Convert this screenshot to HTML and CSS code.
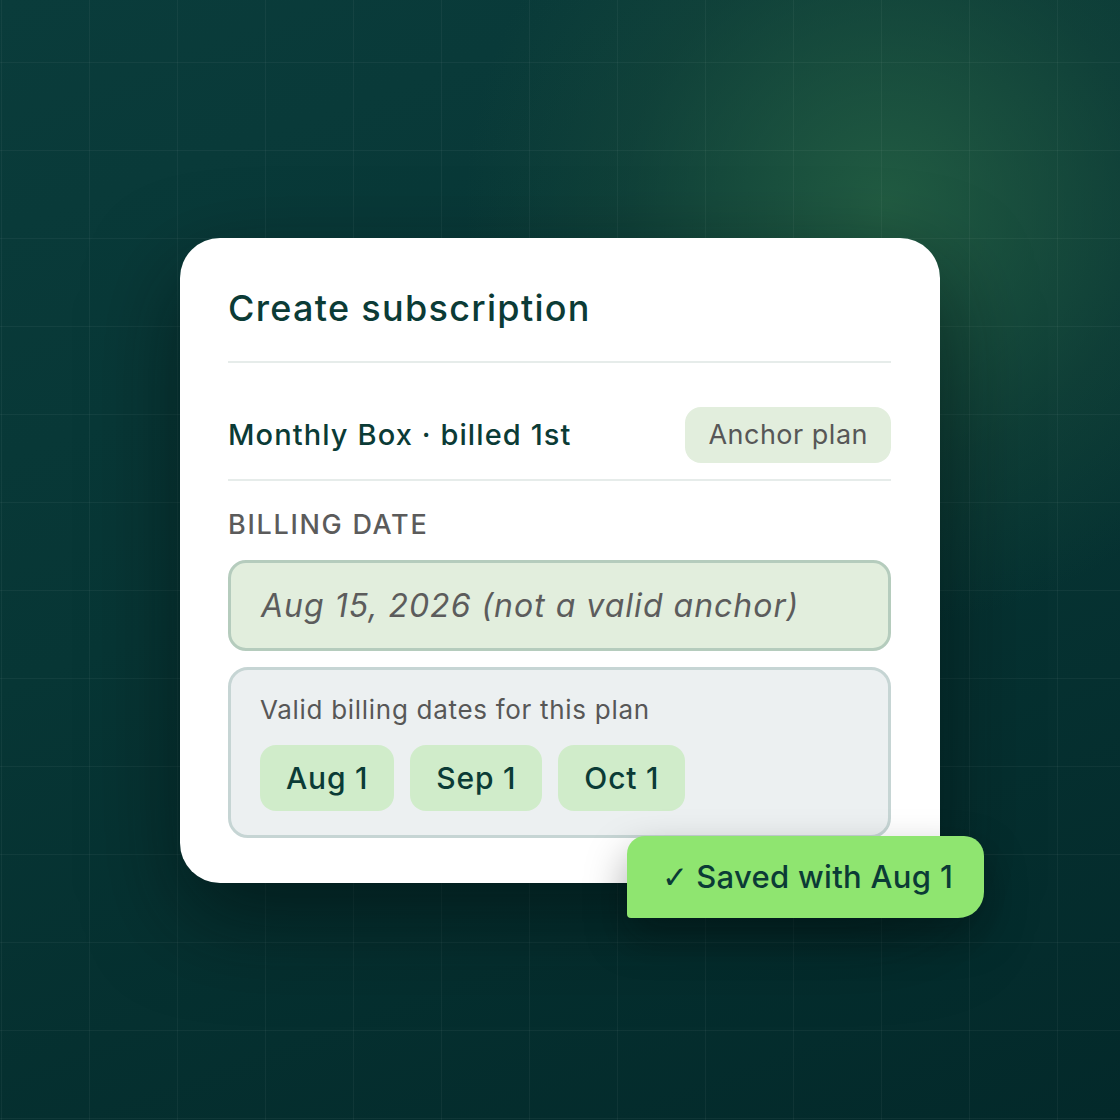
FILE: index.html
```html
<!DOCTYPE html>
<html lang="en">
<head>
    <meta charset="UTF-8">
    <meta name="viewport" content="width=device-width, initial-scale=1.0">
    <title>Create subscription</title>
    <link rel="stylesheet" href="styles.css">
</head>
<body>
    <div class="stage">
        <div class="card">
            <h1 class="title">Create subscription</h1>

            <div class="plan-row">
                <span class="plan-name">Monthly Box · billed 1st</span>
                <span class="badge">Anchor plan</span>
            </div>

            <div class="field">
                <label class="field-label">BILLING DATE</label>
                <div class="date-input">Aug 15, 2026 (not a valid anchor)</div>
            </div>

            <div class="suggestions">
                <p class="suggestions-title">Valid billing dates for this plan</p>
                <div class="chips">
                    <span class="chip">Aug 1</span>
                    <span class="chip">Sep 1</span>
                    <span class="chip">Oct 1</span>
                </div>
            </div>

            <div class="toast"><span class="tick">✓</span> Saved with Aug 1</div>
        </div>
    </div>
</body>
</html>
```

FILE: styles.css
```css
html, body {
    margin: 0;
    height: 100%;
}

body {
    font-family: Inter, "Noto Sans", sans-serif;
    color: #0b3b36;
    background-color: #06302f;
    background-image:
        linear-gradient(to right, rgba(255, 255, 255, 0.045) 1px, transparent 1px),
        linear-gradient(to bottom, rgba(255, 255, 255, 0.045) 1px, transparent 1px),
        radial-gradient(circle at 885px 205px, rgba(38, 98, 68, 0.85) 0, rgba(30, 80, 60, 0.35) 260px, transparent 420px),
        linear-gradient(160deg, #0a3c3b 0%, #073635 45%, #03292a 100%);
    background-size: 88px 88px, 88px 88px, 100% 100%, 100% 100%;
    background-position: 1px 62px, 1px 62px, 0 0, 0 0;
}

.stage {
    height: 100%;
    display: flex;
    align-items: center;
    justify-content: center;
}

.card {
    position: relative;
    width: 760px;
    box-sizing: border-box;
    padding: 48px 49px 45px 48px;
    background: #ffffff;
    border-radius: 40px;
    box-shadow: 0 36px 90px rgba(0, 12, 12, 0.55);
}

.title {
    margin: 0;
    padding-bottom: 31px;
    font-size: 36px;
    line-height: 44px;
    font-weight: 500;
    letter-spacing: 1.3px;
    border-bottom: 2px solid #e6ecea;
}

.plan-row {
    display: flex;
    align-items: center;
    justify-content: space-between;
    padding: 44px 0 16px;
    border-bottom: 2px solid #e6ecea;
}

.plan-name {
    font-size: 29px;
    font-weight: 500;
    letter-spacing: 1.1px;
}

.badge {
    height: 56px;
    box-sizing: border-box;
    display: flex;
    align-items: center;
    padding: 0 23px;
    font-size: 27px;
    letter-spacing: 0.5px;
    color: #575757;
    background: #e2eedd;
    border-radius: 16px;
}

.field {
    padding-top: 28px;
}

.field-label {
    display: block;
    font-size: 27px;
    line-height: 32px;
    font-weight: 500;
    letter-spacing: 1.7px;
    color: #5b5b5b;
}

.date-input {
    margin-top: 19px;
    height: 91px;
    box-sizing: border-box;
    display: flex;
    align-items: center;
    padding-left: 30px;
    font-size: 32px;
    font-style: italic;
    letter-spacing: 1px;
    color: #5c5c5c;
    background: #e2eedd;
    border: 3px solid #b5ccbd;
    border-radius: 18px;
}

.suggestions {
    margin-top: 16px;
    padding: 24px 29px 24px;
    background: #ecf0f1;
    border: 3px solid #c6d5d4;
    border-radius: 20px;
}

.suggestions-title {
    margin: 0;
    font-size: 26px;
    line-height: 32px;
    letter-spacing: 0.7px;
    color: #575757;
}

.chips {
    display: flex;
    gap: 16px;
    margin-top: 19px;
}

.chip {
    padding: 0 26px;
    height: 66px;
    display: flex;
    align-items: center;
    font-size: 30px;
    font-weight: 500;
    letter-spacing: 0.8px;
    background: #d0ecca;
    border-radius: 16px;
}

/* confirmation toast hangs over the card's bottom-right corner */
.toast {
    position: absolute;
    left: 447px;
    top: 598px;
    width: 357px;
    height: 82px;
    box-sizing: border-box;
    display: flex;
    align-items: center;
    gap: 8px;
    padding-left: 35px;
    font-size: 31px;
    font-weight: 500;
    letter-spacing: 0.3px;
    white-space: nowrap;
    color: #0b3b36;
    background: #8fe570;
    border-radius: 18px 20px 26px 4px;
    box-shadow: 0 18px 40px rgba(0, 10, 10, 0.35);
}

.tick {
    font-family: "DejaVu Sans", sans-serif;
    font-weight: 400;
    font-size: 31px;
}
```
